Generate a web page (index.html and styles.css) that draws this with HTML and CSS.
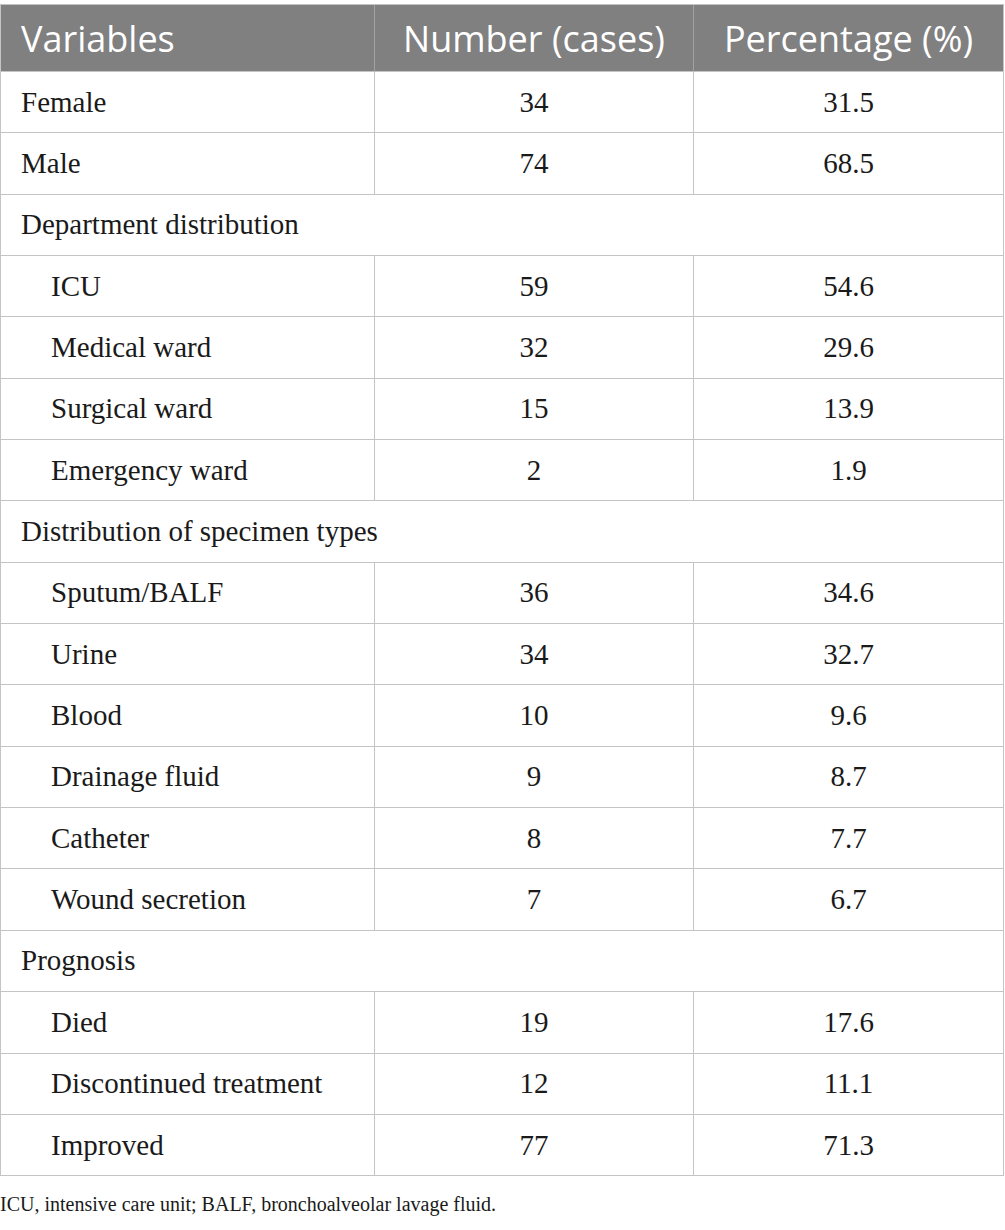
FILE: index.html
```html
<!DOCTYPE html>
<html lang="en">
<head>
<meta charset="utf-8">
<title>Table</title>
<link rel="stylesheet" href="styles.css">
</head>
<body>
<div class="wrap">
<table class="data">
  <colgroup>
    <col class="c1"><col class="c2"><col class="c3">
  </colgroup>
  <thead>
    <tr>
      <th class="left">Variables</th>
      <th>Number (cases)</th>
      <th>Percentage (%)</th>
    </tr>
  </thead>
  <tbody>
    <tr><td class="left">Female</td><td>34</td><td>31.5</td></tr>
    <tr><td class="left">Male</td><td>74</td><td>68.5</td></tr>
    <tr class="group"><td class="left" colspan="3">Department distribution</td></tr>
    <tr><td class="left sub">ICU</td><td>59</td><td>54.6</td></tr>
    <tr><td class="left sub">Medical ward</td><td>32</td><td>29.6</td></tr>
    <tr><td class="left sub">Surgical ward</td><td>15</td><td>13.9</td></tr>
    <tr><td class="left sub">Emergency ward</td><td>2</td><td>1.9</td></tr>
    <tr class="group"><td class="left" colspan="3">Distribution of specimen types</td></tr>
    <tr><td class="left sub">Sputum/BALF</td><td>36</td><td>34.6</td></tr>
    <tr><td class="left sub">Urine</td><td>34</td><td>32.7</td></tr>
    <tr><td class="left sub">Blood</td><td>10</td><td>9.6</td></tr>
    <tr><td class="left sub">Drainage fluid</td><td>9</td><td>8.7</td></tr>
    <tr><td class="left sub">Catheter</td><td>8</td><td>7.7</td></tr>
    <tr><td class="left sub">Wound secretion</td><td>7</td><td>6.7</td></tr>
    <tr class="group"><td class="left" colspan="3">Prognosis</td></tr>
    <tr><td class="left sub">Died</td><td>19</td><td>17.6</td></tr>
    <tr><td class="left sub">Discontinued treatment</td><td>12</td><td>11.1</td></tr>
    <tr><td class="left sub">Improved</td><td>77</td><td>71.3</td></tr>
  </tbody>
</table>
<p class="note">ICU, intensive care unit; BALF, bronchoalveolar lavage fluid.</p>
</div>
</body>
</html>
```

FILE: styles.css
```css
html, body {
  margin: 0;
  padding: 0;
  background: #ffffff;
}

.wrap {
  padding-top: 4px;
  width: 1003px;
}

.data {
  width: 1003px;
  border-collapse: separate;
  border-spacing: 0;
  table-layout: fixed;
  border-top: 1px solid #c4c4c4;
  border-left: 1px solid #c4c4c4;
  font-family: "Liberation Serif", "Times New Roman", serif;
  font-size: 29px;
  color: #1a1a1a;
}

.c1 { width: 374px; }
.c2 { width: 319px; }
.c3 { width: 310px; }

.data th {
  background: #808080;
  color: #ffffff;
  font-family: "Open Sans", "Noto Sans", sans-serif;
  font-weight: 400;
  font-size: 36px;
  height: 67px;
  padding: 0;
  text-align: center;
  vertical-align: middle;
  border-right: 1px solid #a2a2a2;
  border-bottom: 1px solid #c4c4c4;
  box-sizing: border-box;
}

.data th:last-child {
  border-right: 1px solid #c4c4c4;
}

.data td {
  height: 61.35px;
  padding: 0;
  text-align: center;
  vertical-align: middle;
  border-right: 1px solid #c4c4c4;
  border-bottom: 1px solid #c4c4c4;
  box-sizing: border-box;
}

.data .left {
  text-align: left;
  padding-left: 20px;
}

.data .sub {
  padding-left: 50px;
}

.note {
  margin: 16px 0 0 0;
  font-family: "Liberation Serif", "Times New Roman", serif;
  font-size: 20px;
  line-height: 24px;
  color: #1a1a1a;
}
```
